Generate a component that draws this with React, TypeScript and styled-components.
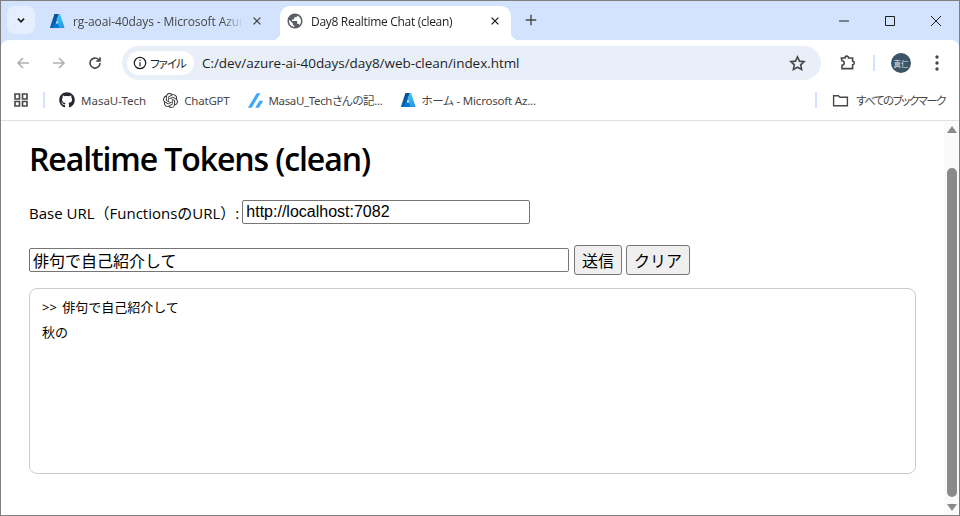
import React from "react";
import styled, { createGlobalStyle } from "styled-components";
import { FaGithub } from "react-icons/fa";
import { SiOpenai, SiZenn } from "react-icons/si";
import { MdPublic } from "react-icons/md";

const UI_FONT = `"Open Sans", "Noto Sans", "Noto Sans CJK JP", sans-serif`;
const JP_FONT = `"Noto Sans", "Noto Sans CJK JP", sans-serif`;
const FORM_FONT = `"Liberation Sans", "Noto Sans CJK JP", sans-serif`;

const Global = createGlobalStyle`
  html, body { margin: 0; padding: 0; background: #fff; overflow: hidden; }
  * { box-sizing: border-box; }
`;

const Frame = styled.div`
  width: 960px;
  height: 516px;
  border: 1px solid #7f7f7f;
  display: flex;
  flex-direction: column;
  overflow: hidden;
  background: #d3e3fd;
  font-family: ${UI_FONT};
`;

const TabStrip = styled.div`
  height: 39px;
  background: #d3e3fd;
  display: flex;
  align-items: flex-start;
  padding: 5px 0 0 6px;
  flex: none;
`;

const TabSearch = styled.div`
  width: 28px;
  height: 28px;
  border-radius: 8px;
  background: #e4eefe;
  display: flex;
  align-items: center;
  justify-content: center;
  margin-right: 8px;
`;

const Tab = styled.div<{ $active?: boolean }>`
  position: relative;
  height: 34px;
  width: ${(p) => (p.$active ? "231px" : "237px")};
  padding: 0 ${(p) => (p.$active ? "10px" : "17px")} 4px 6px;
  display: flex;
  align-items: center;
  gap: ${(p) => (p.$active ? "7px" : "8px")};
  border-radius: 10px 10px 0 0;
  background: ${(p) => (p.$active ? "#fff" : "transparent")};
  color: ${(p) => (p.$active ? "#1f1f1f" : "#474747")};
  font-size: 12px;
  letter-spacing: ${(p) => (p.$active ? "-0.3px" : "-0.1px")};
  white-space: nowrap;
  ${(p) =>
    p.$active &&
    `
    &::before, &::after {
      content: "";
      position: absolute;
      bottom: 0;
      width: 8px;
      height: 8px;
    }
    &::before { left: -8px; background: radial-gradient(circle at 0 0, #d3e3fd 8px, #fff 8.5px); }
    &::after { right: -8px; background: radial-gradient(circle at 100% 0, #d3e3fd 8px, #fff 8.5px); }
  `}
`;

const TabTitle = styled.span`
  flex: 1;
  overflow: hidden;
  min-width: 0;
  -webkit-mask-image: linear-gradient(90deg, #000 88%, transparent);
  mask-image: linear-gradient(90deg, #000 88%, transparent);
`;

const NewTab = styled.div`
  width: 28px;
  height: 28px;
  margin-left: 6px;
  display: flex;
  align-items: center;
  justify-content: center;
`;

const WindowControls = styled.div`
  margin-left: auto;
  display: flex;
  margin-top: -5px;
`;

const WindowButton = styled.div`
  width: 46px;
  height: 39px;
  display: flex;
  align-items: center;
  justify-content: center;
`;

const Toolbar = styled.div`
  height: 44px;
  flex: none;
  background: #fff;
  border-radius: 8px 8px 0 0;
  display: flex;
  align-items: flex-start;
  padding: 6px 0 0 7px;
`;

const NavButton = styled.div`
  width: 30px;
  height: 34px;
  display: flex;
  align-items: center;
  justify-content: center;
  margin-right: 6px;
  flex: none;
`;

const Omnibox = styled.div`
  width: 699px;
  height: 34px;
  margin: 0 11px 0 6px;
  border-radius: 17px;
  background: #e9eff9;
  display: flex;
  align-items: center;
  padding: 0 15px 0 5px;
  flex: none;
`;

const SecurityChip = styled.div`
  height: 24px;
  width: 67px;
  border-radius: 12px;
  background: #fff;
  display: flex;
  align-items: center;
  gap: 3px;
  padding-left: 6px;
  font-size: 11.5px;
  letter-spacing: -1px;
  font-family: ${JP_FONT};
  font-feature-settings: "palt";
  white-space: nowrap;
  color: #1f1f1f;
  margin-right: 8px;
`;

const UrlText = styled.span`
  font-size: 13.5px;
  letter-spacing: -0.05px;
  color: #1f1f1f;
  flex: 1;
`;

const Divider = styled.div<{ $left?: string }>`
  width: 2px;
  height: 16px;
  background: #d3e3fd;
  flex: none;
  margin-left: ${(p) => p.$left ?? "0"};
`;

const ToolbarDivider = styled(Divider)`
  margin-top: 9px;
`;

const Avatar = styled.div`
  width: 20px;
  height: 20px;
  border-radius: 50%;
  background: #3c5566;
  color: #e6e6e6;
  font-size: 7.5px;
  font-family: ${JP_FONT};
  display: flex;
  align-items: center;
  justify-content: center;
  margin: 7px 24px 0 16px;
  flex: none;
`;

const MenuDots = styled.svg`
  margin-top: 9px;
  flex: none;
`;

const BookmarkBar = styled.div`
  height: 37px;
  flex: none;
  background: #fff;
  border-bottom: 1px solid #e1e1e1;
  display: flex;
  align-items: center;
  padding: 0 14px 4px 13px;
  font-size: 11.5px;
  color: #474747;
  font-family: ${JP_FONT};
  font-feature-settings: "palt";
`;

const BookmarkItem = styled.div<{ $gap?: number; $track?: number; $iconGap?: number }>`
  display: flex;
  align-items: center;
  gap: ${(p) => p.$iconGap ?? 6}px;
  margin-left: ${(p) => p.$gap ?? 0}px;
  letter-spacing: ${(p) => p.$track ?? 0}px;
  white-space: nowrap;
`;

const Page = styled.div`
  flex: 1;
  display: flex;
  min-height: 0;
  background: #fff;
`;

const Content = styled.main`
  flex: 1;
  padding: 19px 28px 0 28px;
  color: #000;
  min-width: 0;
`;

const Title = styled.h1`
  margin: 0 0 22px;
  font-family: ${UI_FONT};
  font-size: 32px;
  line-height: 38px;
  font-weight: 600;
  letter-spacing: -1.1px;
`;

const BaseRow = styled.div`
  display: flex;
  align-items: center;
  height: 24px;
  font-size: 15px;
  margin-bottom: 21px;
`;

const BaseLabel = styled.span`
  margin-right: 3px;
`;

const TextField = styled.input<{ $w: number }>`
  width: ${(p) => p.$w}px;
  height: 24px;
  border: 1px solid #767676;
  border-radius: 2px;
  padding: 1px 3px;
  font-family: ${FORM_FONT};
  font-size: 16px;
  color: #000;
  background: #fff;
  outline: none;
  flex: none;
`;

const ChatRow = styled.div`
  display: flex;
  align-items: center;
  gap: 4px;
  height: 30px;
  margin-bottom: 13px;
`;

const FormButton = styled.button<{ $w: number }>`
  width: ${(p) => p.$w}px;
  height: 30px;
  border: 1px solid #767676;
  border-radius: 3px;
  background: #efefef;
  font-family: ${FORM_FONT};
  font-size: 16px;
  color: #000;
  padding: 0;
  &:first-of-type {
    margin-left: 1px;
  }
`;

const Log = styled.div`
  width: 887px;
  height: 186px;
  border: 1px solid #ccc;
  border-radius: 8px;
  padding: 8px 12px;
  font-family: ${JP_FONT};
  font-size: 13px;
  word-spacing: 2px;
`;

const LogLine = styled.div`
  height: 20px;
  line-height: 20px;
  margin-bottom: 5px;
`;

const Scrollbar = styled.div`
  width: 15px;
  flex: none;
  background: #fafafa;
  display: flex;
  flex-direction: column;
  align-items: center;
`;

const ScrollArrow = styled.div<{ $down?: boolean }>`
  width: 0;
  height: 0;
  border-left: 5px solid transparent;
  border-right: 5px solid transparent;
  ${(p) =>
    p.$down
      ? "border-top: 7px solid #8a8a8a; margin-top: 7px;"
      : "border-bottom: 7px solid #8a8a8a; margin: 5px 0 35px;"}
`;

const ScrollThumb = styled.div`
  width: 10px;
  height: 329px;
  border-radius: 5px;
  background: #8a8a8a;
  flex: none;
`;

const Azure = () => (
  <svg width="16" height="16" viewBox="0 0 16 16">
    <defs>
      <linearGradient id="az1" x1="0.3" y1="0" x2="0.5" y2="1">
        <stop offset="0" stopColor="#114a8b" />
        <stop offset="1" stopColor="#0669bc" />
      </linearGradient>
      <linearGradient id="az2" x1="0.2" y1="0" x2="0.8" y2="1">
        <stop offset="0" stopColor="#3ccbf4" />
        <stop offset="1" stopColor="#2892df" />
      </linearGradient>
    </defs>
    <path d="M5.4 1H10L5.2 15H1.6a.6.6 0 0 1-.55-.8z" fill="url(#az1)" />
    <path d="M11.5 10.5H5.2l-1.4 4.4h8.9z" fill="#0078d4" />
    <path d="M10 1h.6a.7.7 0 0 1 .6.45L15.4 14.2a.6.6 0 0 1-.55.8H10.6l-.1-.1L7.6 6z" fill="url(#az2)" />
  </svg>
);

const Line = ({ d, w = 16, c = "#474747", sw = 1.6 }: { d: string; w?: number; c?: string; sw?: number }) => (
  <svg width={w} height={w} viewBox="0 0 16 16" fill="none" stroke={c} strokeWidth={sw}>
    <path d={d} />
  </svg>
);

export default function App() {
  return (
    <Frame>
      <Global />
      <TabStrip>
        <TabSearch>
          <Line d="M4.5 6.5 8 10l3.5-3.5" w={14} c="#1f1f1f" sw={2} />
        </TabSearch>
        <Tab>
          <Azure />
          <TabTitle>rg-aoai-40days - Microsoft Azure</TabTitle>
          <Line d="M3.5 3.5l9 9M12.5 3.5l-9 9" w={12} c="#474747" sw={1.8} />
        </Tab>
        <Tab $active>
          <MdPublic size={18} color="#5b5e66" />
          <TabTitle>Day8 Realtime Chat (clean)</TabTitle>
          <Line d="M3.5 3.5l9 9M12.5 3.5l-9 9" w={12} c="#1f1f1f" sw={1.8} />
        </Tab>
        <NewTab>
          <Line d="M8 2v12M2 8h12" w={14} c="#474747" sw={1.6} />
        </NewTab>
        <WindowControls>
          <WindowButton>
            <Line d="M3 8h10" w={16} c="#1f1f1f" sw={1} />
          </WindowButton>
          <WindowButton>
            <Line d="M3.5 3.5h9v9h-9z" w={16} c="#1f1f1f" sw={1} />
          </WindowButton>
          <WindowButton>
            <Line d="M3 3l10 10M13 3L3 13" w={16} c="#1f1f1f" sw={1} />
          </WindowButton>
        </WindowControls>
      </TabStrip>

      <Toolbar>
        <NavButton>
          <Line d="M14 8H3M8 3 3 8l5 5" c="#aeb0b4" />
        </NavButton>
        <NavButton>
          <Line d="M2 8h11M8 3l5 5-5 5" c="#aeb0b4" />
        </NavButton>
        <NavButton>
          <Line d="M13 8a5 5 0 1 1-1.5-3.5L13 6M13 2.2V6H9.2" />
        </NavButton>
        <Omnibox>
          <SecurityChip>
            <svg width="14" height="14" viewBox="0 0 14 14" fill="none" stroke="#1f1f1f" strokeWidth="1.2">
              <circle cx="7" cy="7" r="5.7" />
              <path d="M7 6.2v4M7 3.8v1.3" />
            </svg>
            ファイル
          </SecurityChip>
          <UrlText>C:/dev/azure-ai-40days/day8/web-clean/index.html</UrlText>
          <Line d="M8 1.8l1.9 4 4.3.5-3.2 3 .9 4.3L8 11.5l-3.9 2.1.9-4.3-3.2-3 4.3-.5z" w={17} sw={1.5} />
        </Omnibox>
        <NavButton>
          <Line d="M3 3.5h3.2a1.6 1.6 0 0 1 3.2 0H13v3a1.5 1.5 0 0 1 0 3v3.5H3.5V10a2 2 0 0 0 0-4z" w={18} sw={1.4} />
        </NavButton>
        <ToolbarDivider $left="5px" />
        <Avatar>真仁</Avatar>
        <MenuDots width="4" height="16" viewBox="0 0 4 16" fill="#474747">
          <circle cx="2" cy="2" r="1.7" />
          <circle cx="2" cy="8" r="1.7" />
          <circle cx="2" cy="14" r="1.7" />
        </MenuDots>
      </Toolbar>

      <BookmarkBar>
        <svg width="16" height="16" viewBox="0 0 16 16" fill="none" stroke="#474747" strokeWidth="1.6">
          <path d="M1 2h4.5v5H1zM8.5 2H13v5H8.5zM1 9.5h4.5V14H1zM8.5 9.5H13V14H8.5z" />
        </svg>
        <Divider $left="13px" />
        <BookmarkItem $gap={14}>
          <FaGithub size={16} color="#24292f" />
          MasaU-Tech
        </BookmarkItem>
        <BookmarkItem $gap={17} $track={-0.2}>
          <SiOpenai size={15} color="#333" />
          ChatGPT
        </BookmarkItem>
        <BookmarkItem $gap={18} $track={-0.35}>
          <SiZenn size={15} color="#3ea8ff" />
          MasaU_Techさんの記...
        </BookmarkItem>
        <BookmarkItem $gap={18} $track={-0.2} $iconGap={5}>
          <Azure />
          ホーム - Microsoft Az...
        </BookmarkItem>
        <Divider $left="auto" />
        <BookmarkItem $gap={15} $track={-1.5} $iconGap={7}>
          <Line d="M1.5 3.5h4.5l1.5 1.5h7v8h-13z" w={17} sw={1.3} />
          すべてのブックマーク
        </BookmarkItem>
      </BookmarkBar>

      <Page>
        <Content>
          <Title>Realtime Tokens (clean)</Title>
          <BaseRow>
            <BaseLabel>Base URL（FunctionsのURL）:</BaseLabel>
            <TextField $w={288} readOnly value="http://localhost:7082" />
          </BaseRow>
          <ChatRow>
            <TextField $w={540} readOnly value="俳句で自己紹介して" />
            <FormButton $w={48}>送信</FormButton>
            <FormButton $w={64}>クリア</FormButton>
          </ChatRow>
          <Log>
            <LogLine>&gt;&gt; 俳句で自己紹介して</LogLine>
            <LogLine>秋の</LogLine>
          </Log>
        </Content>
        <Scrollbar>
          <ScrollArrow />
          <ScrollThumb />
          <ScrollArrow $down />
        </Scrollbar>
      </Page>
    </Frame>
  );
}
